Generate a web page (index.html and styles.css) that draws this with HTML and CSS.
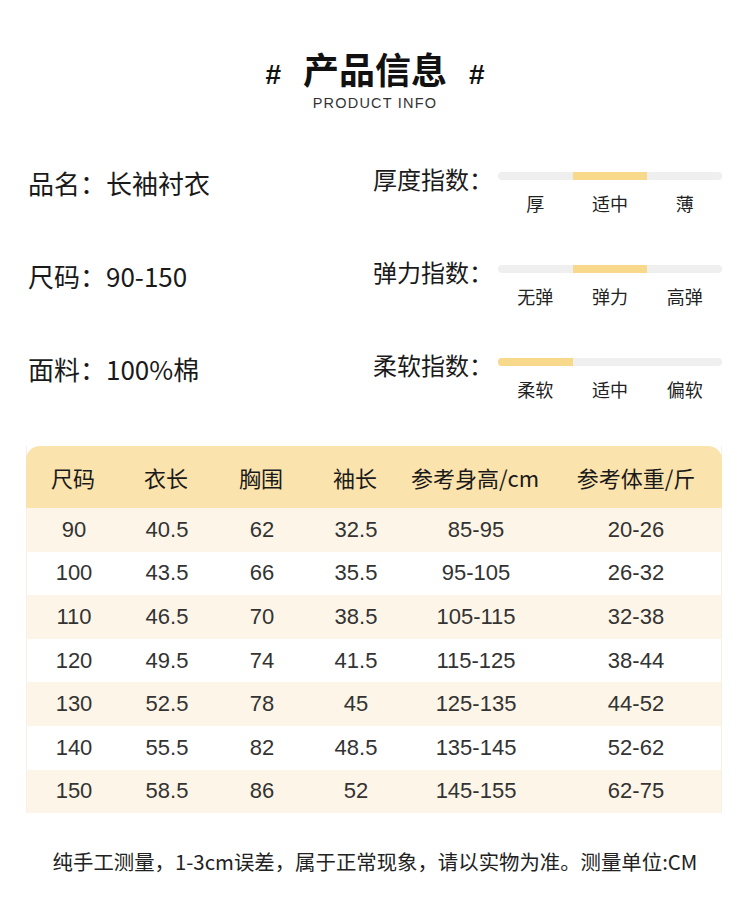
FILE: index.html
```html
<!DOCTYPE html>
<html lang="zh">
<head>
<meta charset="utf-8">
<link rel="stylesheet" href="styles.css">
</head>
<body>
<div class="page">
  <header class="title">
    <h1 class="title-main"><span class="hash">#</span><span class="title-text">产品信息</span><span class="hash">#</span></h1>
    <div class="title-sub">PRODUCT INFO</div>
  </header>

  <section class="info">
    <div class="info-row">
      <div class="info-left">品名：长袖衬衣</div>
      <div class="info-right">
        <div class="idx-label">厚度指数：</div>
        <div class="scale">
          <div class="bar"><span class="seg"></span><span class="seg on"></span><span class="seg"></span></div>
          <div class="scale-labels"><span>厚</span><span>适中</span><span>薄</span></div>
        </div>
      </div>
    </div>
    <div class="info-row">
      <div class="info-left">尺码：90-150</div>
      <div class="info-right">
        <div class="idx-label">弹力指数：</div>
        <div class="scale">
          <div class="bar"><span class="seg"></span><span class="seg on"></span><span class="seg"></span></div>
          <div class="scale-labels"><span>无弹</span><span>弹力</span><span>高弹</span></div>
        </div>
      </div>
    </div>
    <div class="info-row">
      <div class="info-left">面料：100%棉</div>
      <div class="info-right">
        <div class="idx-label">柔软指数：</div>
        <div class="scale">
          <div class="bar"><span class="seg on"></span><span class="seg"></span><span class="seg"></span></div>
          <div class="scale-labels"><span>柔软</span><span>适中</span><span>偏软</span></div>
        </div>
      </div>
    </div>
  </section>

  <section class="size-table">
    <div class="trow thead"><span>尺码</span><span>衣长</span><span>胸围</span><span>袖长</span><span>参考身高/cm</span><span>参考体重/斤</span></div>
    <div class="trow odd"><span>90</span><span>40.5</span><span>62</span><span>32.5</span><span>85-95</span><span>20-26</span></div>
    <div class="trow"><span>100</span><span>43.5</span><span>66</span><span>35.5</span><span>95-105</span><span>26-32</span></div>
    <div class="trow odd"><span>110</span><span>46.5</span><span>70</span><span>38.5</span><span>105-115</span><span>32-38</span></div>
    <div class="trow"><span>120</span><span>49.5</span><span>74</span><span>41.5</span><span>115-125</span><span>38-44</span></div>
    <div class="trow odd"><span>130</span><span>52.5</span><span>78</span><span>45</span><span>125-135</span><span>44-52</span></div>
    <div class="trow"><span>140</span><span>55.5</span><span>82</span><span>48.5</span><span>135-145</span><span>52-62</span></div>
    <div class="trow odd"><span>150</span><span>58.5</span><span>86</span><span>52</span><span>145-155</span><span>62-75</span></div>
  </section>

  <p class="note">纯手工测量，1-3cm误差，属于正常现象，请以实物为准。测量单位:CM</p>
</div>
</body>
</html>
```

FILE: styles.css
```css
html, body {
  margin: 0;
  padding: 0;
  background: #ffffff;
}
body {
  font-family: "Liberation Sans", "Noto Sans CJK SC", sans-serif;
  color: #1a1a1a;
}
.page {
  width: 750px;
  height: 917px;
  overflow: hidden;
}

/* Title */
.title {
  padding-top: 47px;
  text-align: center;
}
.title-main {
  margin: 0;
  height: 42px;
  line-height: 42px;
  font-size: 36px;
  font-weight: bold;
  font-family: "Noto Sans CJK SC", sans-serif;
  color: #111;
  display: flex;
  justify-content: center;
  align-items: baseline;
  gap: 22px;
}
.hash {
  font-family: "Liberation Sans", sans-serif;
  font-size: 28px;
  font-weight: bold;
}
.title-sub {
  margin-top: 6px;
  font-size: 14.5px;
  letter-spacing: 1.2px;
  color: #333;
  line-height: 16px;
}

/* Info */
.info {
  margin-top: 46px;
  padding: 0 28px;
}
.info-row {
  height: 93px;
  display: flex;
  align-items: flex-start;
}
.info-left {
  width: 345px;
  font-size: 26px;
  line-height: 34px;
  padding-top: 9px;
  font-family: "Noto Sans CJK SC", sans-serif;
  color: #1a1a1a;
}
.info-right {
  display: flex;
  align-items: flex-start;
}
.idx-label {
  width: 125px;
  font-size: 24px;
  line-height: 32px;
  padding-top: 6px;
  font-family: "Noto Sans CJK SC", sans-serif;
  color: #1a1a1a;
}
.scale {
  width: 224px;
  padding-top: 15px;
}
.bar {
  display: flex;
  height: 8px;
  border-radius: 4px;
  overflow: hidden;
  background: #efefef;
}
.seg {
  flex: 1;
}
.seg.on {
  background: #f8d98c;
}
.scale-labels {
  display: flex;
  margin-top: 11px;
}
.scale-labels span {
  flex: 1;
  text-align: center;
  font-size: 18px;
  line-height: 24px;
  font-family: "Noto Sans CJK SC", sans-serif;
  color: #222;
}

/* Table */
.size-table {
  margin: 10px 28px 0 26px;
  border-left: 1px solid #f6f1e6;
  border-right: 1px solid #f6f1e6;
}
.trow {
  display: grid;
  grid-template-columns: 94px 92px 98px 90px 150px 1fr;
  height: 43.6px;
  align-items: center;
  text-align: center;
  font-size: 22px;
  color: #333;
  background: #ffffff;
}
.trow.odd {
  background: #fdf6e8;
}
.trow.thead {
  height: 62px;
  background: #fae3ad;
  border-radius: 14px 14px 0 0;
  font-family: "Noto Sans CJK SC", sans-serif;
  font-size: 22px;
  color: #1a1a1a;
  margin: 0 -1px;
}

.note {
  margin: 35px 0 0;
  text-align: center;
  font-size: 20.4px;
  line-height: 26px;
  font-family: "Noto Sans CJK SC", sans-serif;
  color: #222;
}
```
